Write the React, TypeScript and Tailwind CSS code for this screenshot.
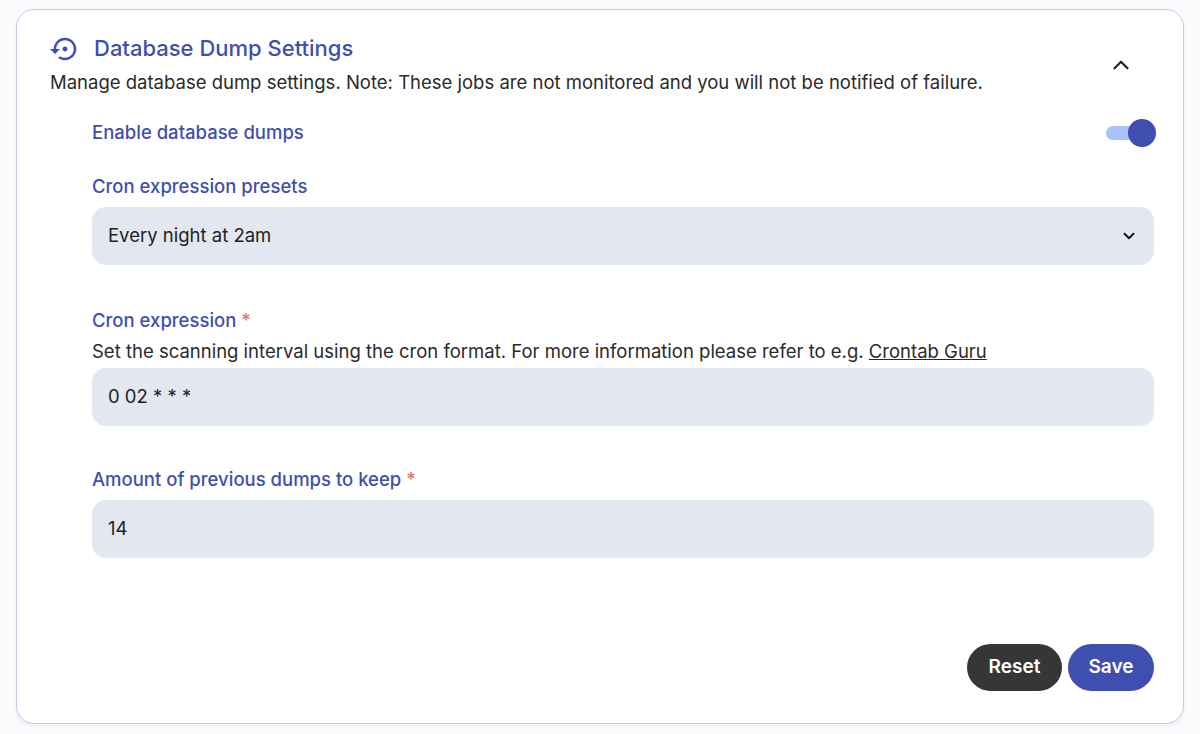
import { MdSettingsBackupRestore } from "react-icons/md"
import { ChevronUp, ChevronDown } from "lucide-react"

const font = { fontFamily: "Inter, 'Noto Sans', sans-serif" }

export default function App() {
  return (
    <div className="min-h-[734px] w-[1200px] bg-[#fbfbfd] px-4 pt-[9px]" style={font}>
      <div className="h-[715px] rounded-[18px] border border-[#c8c6e6] bg-white pl-[33px] pr-[29px] pt-[22px] shadow-[0_2px_4px_rgba(0,0,0,0.06)] flex flex-col">
        <div className="flex items-start justify-between">
          <div>
            <div className="flex items-center gap-[14px]">
              <MdSettingsBackupRestore className="text-[#3f4fb0]" size={30} />
              <h2 className="text-[22px] font-medium text-[#3f4fb0]">Database Dump Settings</h2>
            </div>
            <p className="mt-[4px] text-[18.5px] text-[#2a2a2a]">
              Manage database dump settings. Note: These jobs are not monitored and you will not be notified of failure.
            </p>
          </div>
          <ChevronUp className="mt-[20px] mr-[20px] text-[#222]" size={26} strokeWidth={2} />
        </div>

        <div className="ml-[42px] flex flex-col">
          <div className="mt-[22px] flex items-center justify-between">
            <span className="text-[18.5px] font-medium text-[#3f4fb0]">Enable database dumps</span>
            <div className="relative mr-[-2px] h-[28px] w-[52px]">
              <div className="absolute left-[2px] top-[7px] h-[14px] w-[40px] rounded-full bg-[#a8c4f6]" />
              <div className="absolute right-0 top-0 h-[28px] w-[28px] rounded-full bg-[#3f4fb0]" />
            </div>
          </div>

          <label className="mt-[26px] text-[18.5px] font-medium text-[#3f4fb0]">Cron expression presets</label>
          <div className="mt-[6px] flex h-[58px] items-center justify-between rounded-[14px] bg-[#e3e8f0] px-4 text-[18.5px] text-[#222]">
            <span>Every night at 2am</span>
            <ChevronDown size={18} strokeWidth={2.5} className="text-[#111]" />
          </div>

          <label className="mt-[42px] text-[18.5px] font-medium text-[#3f4fb0]">
            Cron expression <span className="text-[#e57373]">*</span>
          </label>
          <p className="mt-[4px] text-[18.5px] text-[#2a2a2a]">
            Set the scanning interval using the cron format. For more information please refer to e.g.{" "}
            <span className="underline">Crontab Guru</span>
          </p>
          <div className="mt-[2px] flex h-[58px] items-center rounded-[14px] bg-[#e3e8f0] px-4 text-[18.5px] text-[#222]">
            0 02 * * *
          </div>

          <label className="mt-[40px] text-[18.5px] font-medium text-[#3f4fb0]">
            Amount of previous dumps to keep <span className="text-[#e57373]">*</span>
          </label>
          <div className="mt-[6px] flex h-[58px] items-center rounded-[14px] bg-[#e3e8f0] px-4 text-[18.5px] text-[#222]">
            14
          </div>

          <div className="mt-[86px] flex justify-end gap-[6px]">
            <button className="h-[47px] w-[95px] rounded-full bg-[#363636] text-[19px] font-semibold text-white">Reset</button>
            <button className="h-[47px] w-[86px] rounded-full bg-[#3f4fb0] text-[19px] font-semibold text-white">Save</button>
          </div>
        </div>
      </div>
    </div>
  )
}
